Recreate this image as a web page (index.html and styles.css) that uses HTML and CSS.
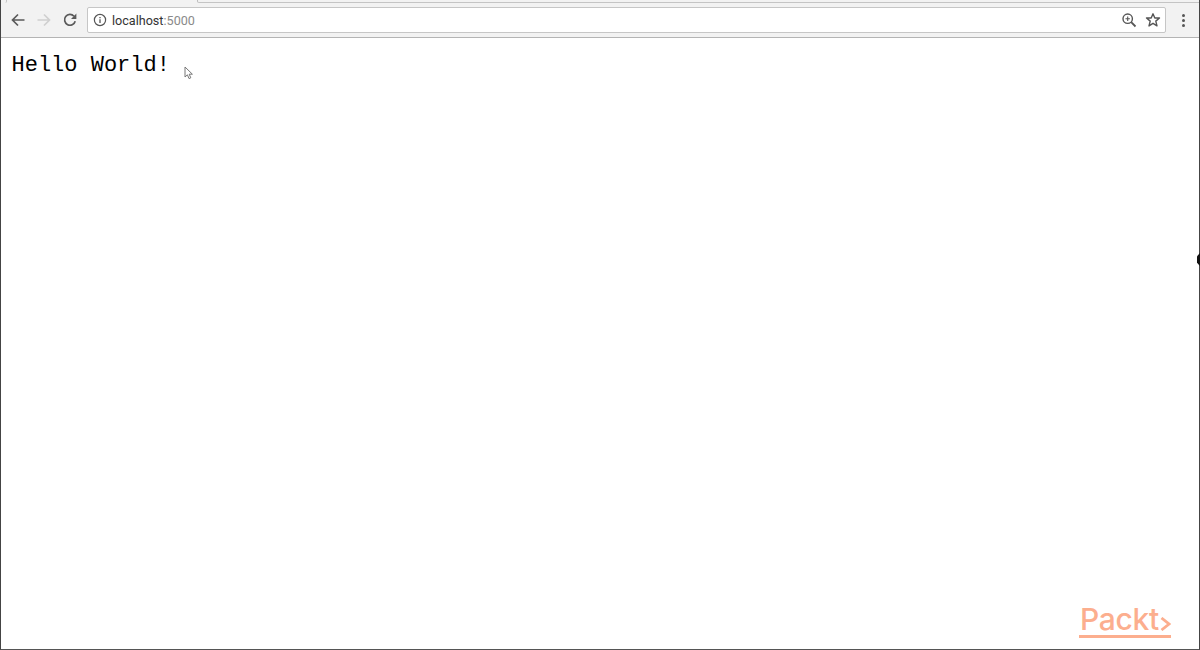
FILE: index.html
```
<!DOCTYPE html>
<html lang="en">
<head>
<meta charset="utf-8">
<title>localhost:5000</title>
<link rel="stylesheet" href="styles.css">
</head>
<body>
<div class="window">
  <div class="tabstrip"><div class="tab-left"></div><div class="tab-active"></div><div class="tab-edge"></div></div>
  <header class="toolbar">
    <button class="nav">
      <svg width="16" height="16" viewBox="0 0 16 16"><path d="M14.5 8H2.5M8 2.5L2.5 8L8 13.5" fill="none" stroke="#5a5a5a" stroke-width="1.7"/></svg>
    </button>
    <button class="nav">
      <svg width="16" height="16" viewBox="0 0 16 16"><path d="M1.5 8H13.5M8 2.5L13.5 8L8 13.5" fill="none" stroke="#cfcfcf" stroke-width="1.7"/></svg>
    </button>
    <button class="nav nav-last">
      <svg width="16" height="16" viewBox="0 0 16 16"><path d="M13.2 9.2A5.4 5.4 0 1 1 12 4.2" fill="none" stroke="#5a5a5a" stroke-width="1.7"/><path d="M14.4 1.6V7H9z" fill="#5a5a5a"/></svg>
    </button>
    <div class="omnibox">
      <svg class="info" width="14" height="14" viewBox="0 0 14 14"><circle cx="7" cy="7" r="5.6" fill="none" stroke="#555" stroke-width="1.2"/><path d="M7 6.2V10M7 3.9V5.2" stroke="#555" stroke-width="1.3"/></svg>
      <span class="url">localhost<span class="port">:5000</span></span>
      <svg class="omni-icon" width="16" height="16" viewBox="0 0 16 16"><circle cx="6.7" cy="6.7" r="4.7" fill="none" stroke="#555" stroke-width="1.4"/><path d="M10.2 10.2L14.5 14.5" stroke="#555" stroke-width="1.8"/><path d="M4.5 6.7H8.9M6.7 4.5V8.9" stroke="#555" stroke-width="1.1"/></svg>
      <svg class="omni-icon" width="16" height="16" viewBox="0 0 16 16"><path d="M8 1.8L9.8 6H14.5L10.8 9.1L12 13.9L8 11.3L4 13.9L5.2 9.1L1.5 6H6.2Z" fill="none" stroke="#555" stroke-width="1.4" stroke-linejoin="round"/></svg>
    </div>
    <div class="menu"><i></i><i></i><i></i></div>
  </header>
  <main class="content">
    <pre class="hello">Hello World!</pre>
  </main>
  <svg class="cursor" width="10" height="14" viewBox="0 0 10 14"><path d="M1 1V11L3.4 8.8L5 12.6L6.8 11.8L5.2 8.2H8.4Z" fill="#fff" stroke="#777" stroke-width="1"/></svg>
  <div class="edge-mark"></div>
  <div class="logo">
    <span class="logo-text">Packt</span>
    <svg class="logo-chevron" width="11" height="14" viewBox="0 0 11 14"><path d="M1.5 1L9 7L1.5 13" fill="none" stroke="#fcae8e" stroke-width="2.8"/></svg>
  </div>
</div>
</body>
</html>
```
FILE: styles.css
```
* { box-sizing: border-box; }
html, body { margin: 0; height: 100%; background: #fff; overflow: hidden; }
.window {
  position: relative;
  width: 1200px;
  height: 650px;
  display: flex;
  flex-direction: column;
  border-left: 1px solid #444;
  border-right: 1px solid #444;
  border-bottom: 1px solid #555;
  background: #fff;
}
.tabstrip {
  height: 3px;
  background: #f2f2f2;
  display: flex;
  flex: none;
}
.tab-left {
  width: 6px;
  height: 3px;
  border-right: 1px solid #c4c4c4;
  border-bottom-right-radius: 2px;
}
.tab-active { width: 190px; }
.tab-edge {
  flex: 1;
  height: 3px;
  border-left: 1px solid #bbb;
  border-bottom: 1px solid #c4c4c4;
  border-bottom-left-radius: 2px;
  background: #f2f2f2;
}
.toolbar {
  flex: none;
  height: 35px;
  display: flex;
  align-items: center;
  background: #f2f2f2;
  border-bottom: 1px solid #b4b4b4;
  padding: 0 7px 0 8px;
}
.nav {
  width: 17px;
  height: 17px;
  padding: 0;
  margin-right: 9.5px;
  border: 0;
  background: none;
  display: flex;
  align-items: center;
  justify-content: center;
}
.nav-last { position: relative; left: -1px; margin-right: 8px; }
.omnibox {
  flex: 1;
  height: 26px;
  margin-right: 9px;
  display: flex;
  align-items: center;
  background: #fff;
  border: 1px solid #c6c6c6;
  border-radius: 2px;
  padding: 0 4px 0 5px;
  font: 12.6px/1 "Roboto", "Liberation Sans", sans-serif;
}
.info { flex: none; }
.url { margin-left: 5px; padding-top: 2px; flex: 1; color: #333; }
.port { color: #8a8a8a; }
.omni-icon { flex: none; margin-left: 8px; }
.menu {
  width: 17px;
  display: flex;
  flex-direction: column;
  align-items: center;
  gap: 2px;
}
.menu i { width: 3px; height: 3px; border-radius: 50%; background: #555; }
.content { flex: 1; padding: 15px 10.5px; }
.hello {
  margin: 0;
  font: 22px/26px "Liberation Mono", monospace;
  color: #000;
}
.cursor { position: absolute; left: 183px; top: 66px; }
.edge-mark {
  position: absolute;
  right: -1px;
  top: 253px;
  width: 3px;
  height: 13px;
  background: #111;
  clip-path: polygon(100% 0, 0 25%, 0 75%, 100% 100%);
}
.logo {
  position: absolute;
  left: 1078px;
  top: 604px;
  width: 92px;
  height: 34px;
  border-bottom: 3px solid #fcae8e;
  display: flex;
  align-items: flex-start;
  justify-content: space-between;
  padding-left: 1px;
}
.logo-text {
  font: 500 30px/30px "Inter", "Liberation Sans", sans-serif;
  letter-spacing: -0.3px;
  color: #fcae8e;
  white-space: nowrap;
}
.logo-chevron { margin-top: 13px; flex: none; }
```
